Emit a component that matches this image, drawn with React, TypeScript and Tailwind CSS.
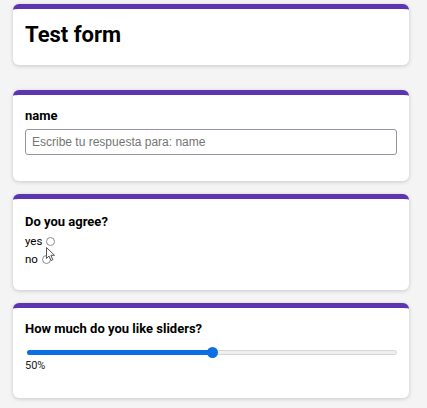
import React from "react";

function Card({ children, className = "" }: { children: React.ReactNode; className?: string }) {
  return (
    <div
      className={`w-[396px] rounded-md border-t-[5px] border-[#5e35b1] bg-white px-3 shadow-[0_1px_4px_rgba(0,0,0,0.18)] ${className}`}
    >
      {children}
    </div>
  );
}

function Radio() {
  return <span className="inline-block h-[9px] w-[9px] rounded-full border border-[#8a8a8a] bg-white" />;
}

export default function App() {
  return (
    <div className="min-h-screen bg-[#f4f4f4] pl-[13px] pt-[4px] font-['Roboto',sans-serif] text-black">
      <Card className="h-[61px] pt-[10px]">
        <h1 className="text-[22px] font-bold leading-[32px]">Test form</h1>
      </Card>

      <Card className="mt-[25px] h-[91px] pt-[13px]">
        <p className="text-[13px] font-bold leading-[16px]">name</p>
        <input
          type="text"
          placeholder="Escribe tu respuesta para: name"
          className="mt-[5px] h-[26px] w-[372px] rounded-[3px] border border-[#9a93a6] px-[6px] font-['Liberation_Sans',sans-serif] text-[12px] placeholder:text-[#757575] outline-none"
        />
      </Card>

      <Card className="mt-[13px] h-[96px] pt-[15px]">
        <p className="text-[13px] font-bold leading-[16px]">Do you agree?</p>
        <div className="mt-[2px] flex flex-col text-[11.5px] leading-[18px]">
          <label className="flex items-center gap-[4px]">
            <span>yes</span>
            <Radio />
          </label>
          <label className="relative flex items-center gap-[4px]">
            <span>no</span>
            <Radio />
            <svg
              className="absolute left-[20px] top-[-4px]"
              width="12"
              height="16"
              viewBox="0 0 12 16"
              fill="white"
              stroke="#555"
              strokeWidth="1"
            >
              <path d="M1.5 1.5 L1.5 12.5 L4 10 L6 14.5 L7.8 13.7 L5.9 9.3 L9.5 9.3 Z" />
            </svg>
          </label>
        </div>
      </Card>

      <Card className="mt-[13px] h-[95px] pt-[13px]">
        <p className="text-[13px] font-bold leading-[16px]">How much do you like sliders?</p>
        <div className="relative ml-[2px] mt-[13px] h-[5px] w-[370px] rounded-full border border-[#d6d6d6] bg-[#efefef]">
          <div className="absolute left-[-1px] top-[-1px] h-[5px] w-[185px] rounded-full bg-[#0b6fe3]" />
          <div className="absolute left-[179px] top-[-4px] h-[11px] w-[11px] rounded-full bg-[#0b6fe3]" />
        </div>
        <p className="mt-[4px] text-[11px] leading-[14px] text-[#222]">50%</p>
      </Card>
    </div>
  );
}
